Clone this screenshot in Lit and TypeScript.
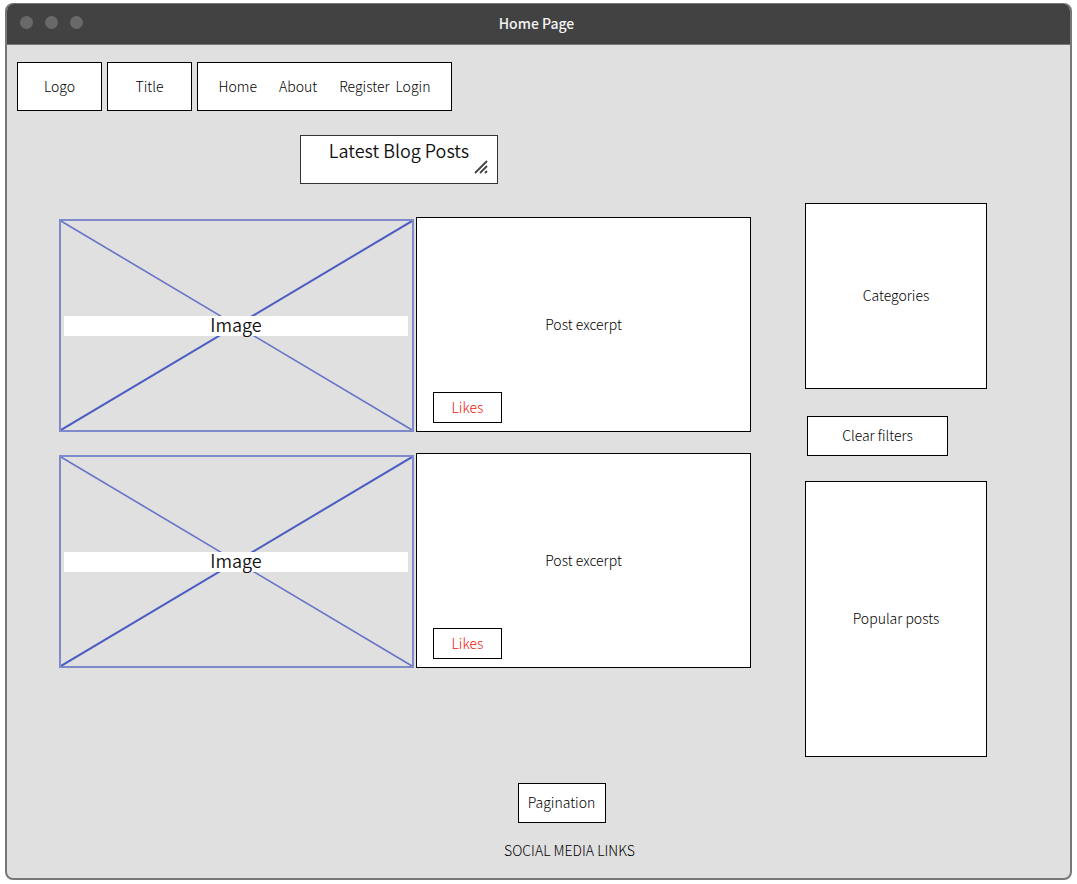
import { LitElement, html, css } from "lit";
import { customElement, property } from "lit/decorators.js";

@customElement("image-placeholder")
class ImagePlaceholder extends LitElement {
  static styles = css`
    :host {
      display: grid;
      box-sizing: border-box;
    }
    .cross,
    .label {
      grid-area: 1 / 1;
    }
    .cross {
      display: block;
      width: 100%;
      height: 100%;
      min-height: 0;
      contain: size;
      box-sizing: border-box;
      border: 2px solid #7f8acb;
    }
    .label {
      align-self: center;
      box-sizing: border-box;
      height: 20px;
      margin: 0 6px 0 5px;
      background: #fff;
      color: #111;
      text-align: center;
      font-size: 18px;
      font-weight: 350;
      line-height: 16px;
    }
  `;

  render() {
    return html`
      <svg class="cross" viewBox="0 0 100 100" preserveAspectRatio="none" aria-hidden="true">
        <path d="M0 0 100 100" fill="none" stroke="#6673c8" stroke-width="1.6" vector-effect="non-scaling-stroke" />
        <path d="M100 0 0 100" fill="none" stroke="#4a5bc2" stroke-width="2" vector-effect="non-scaling-stroke" />
      </svg>
      <span class="label">Image</span>
    `;
  }
}

@customElement("post-row")
class PostRow extends LitElement {
  @property() excerpt = "";

  static styles = css`
    :host {
      display: grid;
      grid-template-columns: minmax(0, 355fr) minmax(0, 335fr);
      gap: 2px;
      min-height: 215px;
    }
    .picture {
      margin-top: 2px;
    }
    .card {
      display: grid;
      box-sizing: border-box;
      border: 1px solid #000;
      background: #fff;
    }
    .excerpt,
    .likes {
      grid-area: 1 / 1;
    }
    .excerpt {
      place-self: center;
      margin: 0;
      padding-bottom: 2px;
    }
    .likes {
      place-self: end start;
      box-sizing: border-box;
      width: 69px;
      height: 31px;
      margin: 0 0 8px 16px;
      padding: 0 0 2px;
      border: 1px solid #000;
      background: #fff;
      color: #f01408;
      font: inherit;
    }
  `;

  render() {
    return html`
      <image-placeholder class="picture"></image-placeholder>
      <article class="card">
        <p class="excerpt">${this.excerpt}</p>
        <button class="likes" type="button">Likes</button>
      </article>
    `;
  }
}

@customElement("app-root")
class AppRoot extends LitElement {
  static styles = css`
    :host {
      display: block;
      box-sizing: border-box;
      min-height: 100vh;
      padding: 3px 5px 4px;
      background: #fff;
      color: #000;
      font-family: "Noto Sans CJK SC", "Noto Sans", sans-serif;
      font-size: 14px;
      font-weight: 300;
      line-height: 20px;
    }
    .window {
      overflow: hidden;
      border: 2px solid #777;
      border-top: 1px solid #777;
      border-radius: 8px;
      background: #e0e0e0;
    }
    .titlebar {
      display: grid;
      grid-template-columns: 1fr auto 1fr;
      align-items: center;
      height: 40px;
      padding: 0 17px 0 13px;
      border-bottom: 1px solid #777;
      background: #424242;
    }
    .dots {
      display: flex;
      gap: 12px;
      padding-bottom: 3px;
    }
    .dot {
      width: 13px;
      height: 13px;
      border-radius: 50%;
      background: #696969;
    }
    .caption {
      padding-bottom: 2px;
      color: #f4f4f4;
      font-weight: 500;
    }
    .header {
      display: flex;
      gap: 5px;
      padding: 17px 10px 0;
    }
    .box {
      display: flex;
      align-items: center;
      justify-content: center;
      box-sizing: border-box;
      padding: 0 0 2px;
      border: 1px solid #000;
      background: #fff;
      color: #000;
      font: inherit;
    }
    .brand {
      width: 85px;
      height: 49px;
    }
    .nav {
      width: 255px;
      height: 49px;
      gap: 22px;
    }
    .account {
      display: flex;
      gap: 6px;
    }
    .link {
      color: inherit;
      text-decoration: none;
    }
    .content {
      display: grid;
      grid-template-columns: minmax(0, 692fr) minmax(0, 182fr);
      gap: 54px;
      padding: 0 83px 0 52px;
    }
    .latest {
      display: grid;
      width: 198px;
      margin: 24px auto 33px;
    }
    .posts-head {
      padding-right: 12px;
    }
    .heading,
    .grip {
      grid-area: 1 / 1;
    }
    .heading {
      box-sizing: border-box;
      width: 100%;
      height: 49px;
      padding: 2px 8px;
      border: 1px solid #333;
      border-radius: 0;
      background: #fff;
      color: #111;
      font: inherit;
      font-size: 18px;
      font-weight: 350;
      line-height: 24px;
      text-align: center;
      resize: none;
      overflow: hidden;
    }
    .grip {
      place-self: end;
      width: 14px;
      height: 14px;
      margin: 0 10px 10px 0;
    }
    .posts {
      display: grid;
      gap: 21px;
    }
    .sidebar {
      padding-top: 92px;
    }
    .categories {
      height: 186px;
    }
    .clear {
      width: 141px;
      height: 40px;
      margin: 27px 2px 25px;
    }
    .popular {
      height: 276px;
    }
    .footer {
      display: flex;
      flex-direction: column;
      align-items: center;
      gap: 17px;
      padding: 26px 0 18px 62px;
    }
    .pagination {
      width: 88px;
      height: 40px;
      margin-right: 16px;
    }
    .social {
      margin: 0;
    }
  `;

  private posts = ["Post excerpt", "Post excerpt"];

  render() {
    return html`
      <div class="window">
        <div class="titlebar">
          <div class="dots">
            <span class="dot"></span><span class="dot"></span><span class="dot"></span>
          </div>
          <span class="caption">Home Page</span>
        </div>
        <header class="header">
          <div class="box brand">Logo</div>
          <div class="box brand">Title</div>
          <nav class="box nav">
            <a class="link" href="#home">Home</a>
            <a class="link" href="#about">About</a>
            <span class="account">
              <a class="link" href="#register">Register</a>
              <a class="link" href="#login">Login</a>
            </span>
          </nav>
        </header>
        <div class="content">
          <main>
            <div class="posts-head">
              <div class="latest">
                <textarea class="heading" aria-label="Section heading" rows="1" .value=${"Latest Blog Posts"}></textarea>
                <svg class="grip" viewBox="0 0 14 14" aria-hidden="true">
                  <path d="M1 13 13 1M6 13l7-7M11 13l2-2" fill="none" stroke="#444" stroke-width="1.8" />
                </svg>
              </div>
            </div>
            <div class="posts">
              ${this.posts.map((text) => html`<post-row .excerpt=${text}></post-row>`)}
            </div>
          </main>
          <aside class="sidebar">
            <section class="box categories">Categories</section>
            <button class="box clear" type="button">Clear filters</button>
            <section class="box popular">Popular posts</section>
          </aside>
        </div>
        <footer class="footer">
          <button class="box pagination" type="button">Pagination</button>
          <p class="social">SOCIAL MEDIA LINKS</p>
        </footer>
      </div>
    `;
  }
}
